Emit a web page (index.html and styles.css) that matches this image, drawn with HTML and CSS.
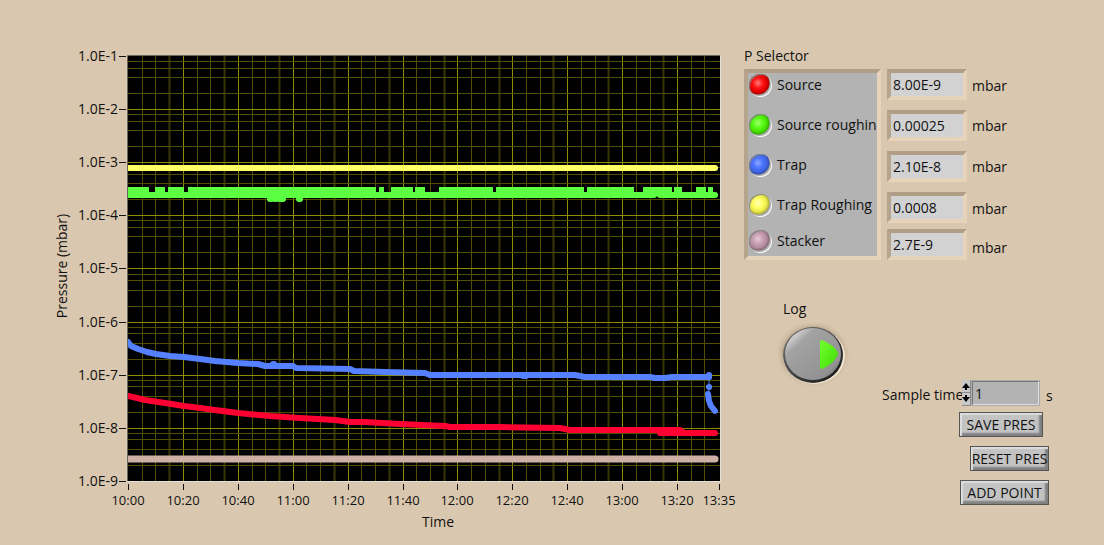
FILE: index.html
```
<!DOCTYPE html>
<html lang="en">
<head>
    <meta charset="UTF-8">
    <meta name="viewport" content="width=device-width, initial-scale=1.0">
    <title>Pressure Monitor</title>
    <link rel="stylesheet" href="styles.css">
</head>
<body>
    <main class="panel">

        <!-- Pressure chart -->
        <svg class="chart" viewBox="0 0 736 540" role="img" aria-label="Pressure over time">
            <clipPath id="plotArea"><rect x="128" y="56" width="592" height="425"/></clipPath>
            <rect class="plot" x="128" y="56" width="592" height="425"/>
            <g id="grid"></g>
            <path class="frame-dark" d="M127.5 481V55.5H720"/>
            <path class="frame-light" d="M128 481.5H720.5V56"/>
            <g id="traces" clip-path="url(#plotArea)"></g>
            <g id="axes"></g>
            <text class="axis-title" x="438" y="527">Time</text>
            <text class="axis-title" transform="translate(67 266) rotate(-90)">Pressure (mbar)</text>
        </svg>

        <div class="side">
            <h2>P Selector</h2>
            <div class="top-row">
                <div class="selector">
                    <label><input type="checkbox" class="led red">Source</label>
                    <label><input type="checkbox" class="led green">Source roughin</label>
                    <label><input type="checkbox" class="led blue">Trap</label>
                    <label><input type="checkbox" class="led yellow">Trap Roughing</label>
                    <label><input type="checkbox" class="led pink">Stacker</label>
                </div>
                <div class="readings">
                    <input type="text" value="8.00E-9" aria-label="Source pressure" readonly>
                    <input type="text" value="0.00025" aria-label="Source roughing pressure" readonly>
                    <input type="text" value="2.10E-8" aria-label="Trap pressure" readonly>
                    <input type="text" value="0.0008" aria-label="Trap roughing pressure" readonly>
                    <input type="text" value="2.7E-9" aria-label="Stacker pressure" readonly>
                </div>
                <div class="units">
                    <span>mbar</span>
                    <span>mbar</span>
                    <span>mbar</span>
                    <span>mbar</span>
                    <span>mbar</span>
                </div>
            </div>

            <div class="bottom-row">
                <div class="log">
                    <label for="logBtn">Log</label>
                    <button id="logBtn" class="log-btn" aria-label="Log">
                        <svg viewBox="0 0 78 72">
                            <defs>
                                <radialGradient id="halo">
                                    <stop offset="0.75" stop-color="#b39f86"/>
                                    <stop offset="1" stop-color="#d9c8af" stop-opacity="0"/>
                                </radialGradient>
                                <linearGradient id="rim" x1="0" y1="0" x2="1" y2="1">
                                    <stop offset="0" stop-color="#777"/>
                                    <stop offset="1" stop-color="#111"/>
                                </linearGradient>
                                <linearGradient id="face" x1="0" y1="0" x2="1" y2="1">
                                    <stop offset="0.1" stop-color="#e0e0e0"/>
                                    <stop offset="0.28" stop-color="#a2a2a2"/>
                                    <stop offset="0.8" stop-color="#929292"/>
                                    <stop offset="1" stop-color="#555"/>
                                </linearGradient>
                                <linearGradient id="lamp" x1="0" y1="0" x2="1" y2="1">
                                    <stop offset="0" stop-color="#74ff34"/>
                                    <stop offset="1" stop-color="#3ddc00"/>
                                </linearGradient>
                            </defs>
                            <ellipse cx="39" cy="35" rx="38" ry="34" fill="url(#halo)"/>
                            <ellipse cx="40" cy="37" rx="31" ry="28" fill="#f2e6d2"/>
                            <ellipse cx="39" cy="36" rx="30" ry="28" fill="url(#rim)"/>
                            <ellipse cx="39" cy="35" rx="28" ry="26" fill="url(#face)"/>
                            <path d="M46 22q1-2 4 0 9 4 13 10 2 3 0 5 -4 8-13 12 -3 2-4 0z" fill="url(#lamp)"/>
                        </svg>
                    </button>
                </div>

                <div class="actions">
                    <div class="sample">
                        <label for="sampleTime">Sample time</label>
                        <div class="spin">
                            <button aria-label="Increase"><svg viewBox="0 0 8 12"><path d="M4 3L8 8H5V10H3V8H0z"/></svg></button>
                            <button aria-label="Decrease"><svg viewBox="0 0 8 12"><path d="M4 9L8 4H5V2H3V4H0z"/></svg></button>
                        </div>
                        <input type="text" id="sampleTime" value="1">
                        <span>s</span>
                    </div>
                    <button class="btn save">SAVE PRES</button>
                    <button class="btn reset">RESET PRES</button>
                    <button class="btn add">ADD POINT</button>
                </div>
            </div>
        </div>
    </main>

    <script>
        const left = 128, top_ = 56, decade = 53.1, step = 54.9;
        let grid = "", axes = "";

        // Time grid: a line every 5 minutes, a strong one every 20
        for (let i = 1; i <= 42; i++) {
            let x = Math.round(left + i * step / 4) + 0.5;
            let cls = i % 4 == 0 ? "major" : (i % 4 == 3 ? "minor dim" : "minor");
            grid += `<path class="${cls}" d="M${x} 56V481"/>`;
        }

        // Log grid, one decade at a time
        for (let d = 0; d < 8; d++) {
            let y0 = top_ + d * decade;
            [0.8, 0.6, 0.4, 0.2].forEach(f => {
                let y = Math.round(y0 - Math.log10(f) * decade) + 0.5;
                grid += `<path class="minor" d="M128 ${y}H720"/>`;
            });
            if (d > 0) grid += `<path class="major" d="M128 ${Math.round(y0) + 0.5}H720"/>`;
        }
        document.getElementById("grid").innerHTML = grid;

        for (let d = 0; d <= 8; d++) {
            let y = Math.round(top_ + d * decade);
            axes += `<path class="tick" d="M119 ${y + 0.5}H126"/>`;
            axes += `<text class="y-label" x="118" y="${y + 5}">1.0E-${d + 1}</text>`;
        }
        const times = ["10:00", "10:20", "10:40", "11:00", "11:20", "11:40", "12:00", "12:20", "12:40", "13:00", "13:20", "13:35"];
        times.forEach((t, i) => {
            let x = i == 11 ? 719 : Math.round(left + i * step);
            axes += `<path class="tick" d="M${x + 0.5} 484V490"/>`;
            axes += `<text class="x-label" x="${x}" y="505">${t}</text>`;
        });
        document.getElementById("axes").innerHTML = axes;

        const traces = [
            ["yellow", "M128 168H715"],
            ["green", "M128 195H654M660 195H715M650 193H665"],
            // upper level of the source roughing signal
            ["green flat", "M128 190H149M155 190H165M168 190H184M188 190H376M379 190H384M391 190H413M415 190H425M439 190H493M496 190H584M587 190H634M643 190H672M674 190H682M696 190H706M708 190H713"],
            ["green", "M270 199H271M275 199H276M280 199H283M299 199H300"],
            ["pink", "M128 459H715"],
            ["blue", "M128 342L131 346L138 349L147 352L156 354L170 356L184 357L200 359L215 361L238 363L258 364L265 366L293 366L296 368L350 369L354 371L385 372L425 373L430 375H575L585 377L650 377L655 378H665L672 377H709M273 364H274M523 376H526"],
            ["blue", "M709 375V377M709 387H709.1M708 394L709 401L711 406L715 411"],
            ["blue thin", "M709 377V395"],
            ["red", "M128 396L145 400L165 403L184 406L200 408L215 410L238 413L270 416L300 418L335 420L350 422L365 422L400 424L445 426L450 427H500L560 428L570 430H680L684 433H715M660 433H684"]
        ];
        document.getElementById("traces").innerHTML =
            traces.map(t => `<path class="trace ${t[0]}" d="${t[1]}"/>`).join("");
    </script>
</body>
</html>
```
FILE: styles.css
```
* {
    box-sizing: border-box;
}

body {
    margin: 0;
    background: #d9c8af;
    color: #111;
    font-family: "Open Sans", "Noto Sans", sans-serif;
    font-size: 14px;
    line-height: 20px;
}

input, button {
    font: inherit;
    color: inherit;
    margin: 0;
}

.panel {
    display: grid;
    grid-template-columns: 2fr 1fr;
}

/* Chart */
.chart {
    display: block;
    width: 100%;
}

.chart text {
    fill: #111;
}

.plot {
    fill: #000;
}

.major, .minor, .tick, .trace, .frame-dark, .frame-light {
    fill: none;
}

.major {
    stroke: #8c8c00;
}

.minor {
    stroke: #505000;
}

.dim {
    stroke: #363600;
    stroke-width: 2;
}

.frame-dark {
    stroke: #6b6659;
}

.frame-light {
    stroke: #e4e0da;
}

.tick {
    stroke: #111;
}

.x-label {
    font-size: 13px;
}

.x-label, .axis-title {
    text-anchor: middle;
}

.y-label {
    text-anchor: end;
}

.trace {
    stroke-width: 6;
    stroke-linecap: round;
    stroke-linejoin: round;
}

.trace.yellow { stroke: #ffff66; }
.trace.green { stroke: #5cff42; }
.trace.blue { stroke: #5580ff; }
.trace.red { stroke: #ff0033; }
.trace.pink { stroke: #ceb0a6; stroke-width: 7; }
.trace.thin { stroke-width: 1; }
.trace.flat { stroke-linecap: butt; }

/* Selector and readings */
.side {
    padding: 46px 16px 0 8px;
}

h2 {
    margin: 0;
    font-size: 14px;
    font-weight: normal;
}

.top-row {
    display: flex;
    align-items: flex-start;
    margin-top: 3px;
}

.selector {
    display: grid;
    grid-template-rows: 40px 40px 40px 36px 27px;
    width: 137px;
    background: #b3b3b3;
    border: 4px solid;
    border-color: #b09e87 #e6d3b9 #e6d3b9 #b6a48c;
}

.selector label {
    display: flex;
    align-items: center;
    gap: 5px;
    height: 24px;
    padding-left: 1px;
    white-space: nowrap;
}

.led {
    appearance: none;
    flex: none;
    width: 23px;
    height: 23px;
    border-radius: 50%;
    box-shadow: inset 1px 1px 1px #858585, inset -1px -1px 1px #fff;
}

.led.red { background: radial-gradient(circle at 9px 9px, #ff8080, #ff1414 5px, #e00000 9px, #b00000 11px, #a6a6a6 12px); }
.led.green { background: radial-gradient(circle at 9px 9px, #a0ff70, #5afc18 5px, #45e000 9px, #35b000 11px, #a6a6a6 12px); }
.led.blue { background: radial-gradient(circle at 9px 9px, #8faaff, #4b74ff 5px, #4063e0 9px, #304fb0 11px, #a6a6a6 12px); }
.led.yellow { background: radial-gradient(circle at 9px 9px, #ffffb8, #ffff60 5px, #e6e64c 9px, #b0b038 11px, #a6a6a6 12px); }
.led.pink { background: radial-gradient(circle at 9px 9px, #e6c8d6, #c9a0b4 5px, #b08a9c 9px, #886878 11px, #a6a6a6 12px); }

.readings {
    display: grid;
    grid-template-rows: 41px 41px 41px 37px 30px;
    align-items: start;
    margin-left: 6px;
}

.readings input {
    width: 80px;
    height: 31px;
    padding: 0 2px;
    background: #d2d2d2;
    border: 4px solid;
    border-color: #b09e87 #e6d3b9 #e6d3b9 #b6a48c;
    border-radius: 0;
    outline: none;
}

.units {
    display: grid;
    grid-template-rows: 40px 41px 42px 39px 20px;
    margin: 7px 0 0 5px;
}

/* Log button and sampling */
.bottom-row {
    display: flex;
    align-items: flex-start;
    margin-top: 39px;
}

.log {
    display: flex;
    flex-direction: column;
    align-items: center;
    width: 78px;
    margin-left: 30px;
}

.log label {
    align-self: flex-start;
    margin-left: 9px;
}

.log-btn {
    width: 78px;
    height: 72px;
    padding: 0;
    border: 0;
    background: none;
    cursor: pointer;
}

.log-btn svg {
    display: block;
}

.actions {
    display: flex;
    flex-direction: column;
    align-items: flex-start;
    margin: 81px 0 0 30px;
}

.sample {
    display: flex;
    align-items: center;
    white-space: nowrap;
}

.sample label {
    width: 80px;
    padding-top: 4px;
}

.sample span {
    padding: 6px 0 0 6px;
}

.spin {
    display: flex;
    flex-direction: column;
    width: 9px;
}

.spin button {
    height: 13px;
    padding: 0;
    border: 1px solid #8c8c8c;
    border-width: 0 1px 1px 0;
    background: #c8c8c8;
}

.spin svg {
    display: block;
    width: 8px;
    height: 12px;
}

.sample input {
    width: 69px;
    height: 26px;
    padding: 0 2px;
    background: #b3b3b3;
    border: 2px solid;
    border-color: #777 #ddd #ddd #777;
    border-radius: 0;
    outline: 1px solid #aaa;
    outline-offset: -1px;
}

.btn {
    height: 25px;
    padding: 0;
    background: #c3c3c3;
    border: 1px solid #555;
    box-shadow: inset 2px 2px 1px #ddd, inset -3px -3px 2px #808080;
    white-space: nowrap;
    cursor: pointer;
}

.save {
    width: 84px;
    margin: 6px 0 0 77px;
}

.reset {
    width: 79px;
    margin: 9px 0 0 88px;
}

.add {
    width: 89px;
    margin: 9px 0 0 78px;
}
```
